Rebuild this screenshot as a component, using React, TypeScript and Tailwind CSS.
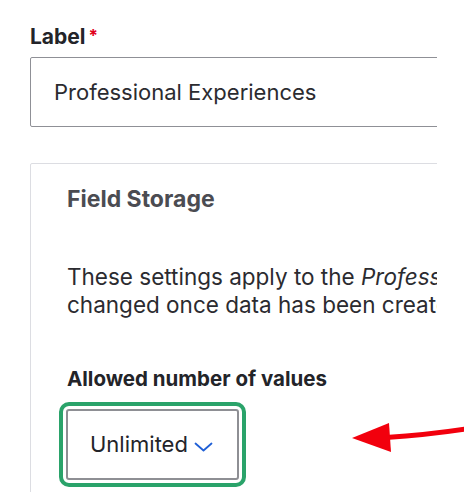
import React from 'react';

const font = { fontFamily: 'Inter, "Liberation Sans", sans-serif' };

const Chevron = () => (
  <svg width="19" height="10" viewBox="0 0 19 10" fill="none" className="ml-[6px] mt-[4px]">
    <path d="M1.5 1.5L9.5 8.5L17.5 1.5" stroke="#1f5fd6" strokeWidth={1.8} strokeLinecap="round" strokeLinejoin="round" />
  </svg>
);

const App = () => {
  return (
    <div className="relative w-[464px] h-[492px] bg-white overflow-hidden" style={font}>
      <div className="w-[437px] overflow-hidden pl-[30px] pt-[25px] h-full">
        {/* Label field */}
        <div className="flex items-start text-[21px] leading-[24px] font-bold text-[#232429]">
          Label
          <span className="text-[#e0001b] text-[17px] leading-[17px] ml-[3px] mt-[3px]">*</span>
        </div>
        <div className="mt-[8px] w-[470px] h-[70px] border border-[#8f9096] rounded-[2px] flex items-center pl-[23px] text-[22px] text-[#2b2b30]">
          Professional Experiences
        </div>

        {/* Field storage card */}
        <div className="mt-[36px] w-[470px] h-[400px] border border-[#dcdde2] rounded-[2px] pl-[36px] pt-[21px]">
          <h3 className="text-[23px] leading-[28px] font-bold text-[#4b4c52]">Field Storage</h3>
          <p className="mt-[50px] text-[22.5px] leading-[28px] text-[#2b2b30] whitespace-nowrap">
            These settings apply to the <em>Professional</em>
            <br />
            changed once data has been created.
          </p>
          <div className="mt-[48px] text-[20.5px] leading-[24px] font-bold text-[#232429]">Allowed number of values</div>
          <div className="mt-[18px] -ml-[1px] w-[173px] h-[71px] border-2 border-[#8e8f94] rounded-[3px] outline-4 outline-offset-[3px] outline-[#2aa36a] flex items-center pl-[22px] text-[22px] text-[#232429]">
            Unlimited
            <Chevron />
          </div>
        </div>
      </div>

      {/* Annotation arrow */}
      <svg className="absolute left-0 top-0" width="464" height="492" viewBox="0 0 464 492">
        <path d="M386 437.5 C410 436, 440 433, 466 429" stroke="#f2000d" strokeWidth={5} fill="none" />
        <polygon points="352,438 389,423 391,452" fill="#f2000d" />
      </svg>
    </div>
  );
};

export default App;
